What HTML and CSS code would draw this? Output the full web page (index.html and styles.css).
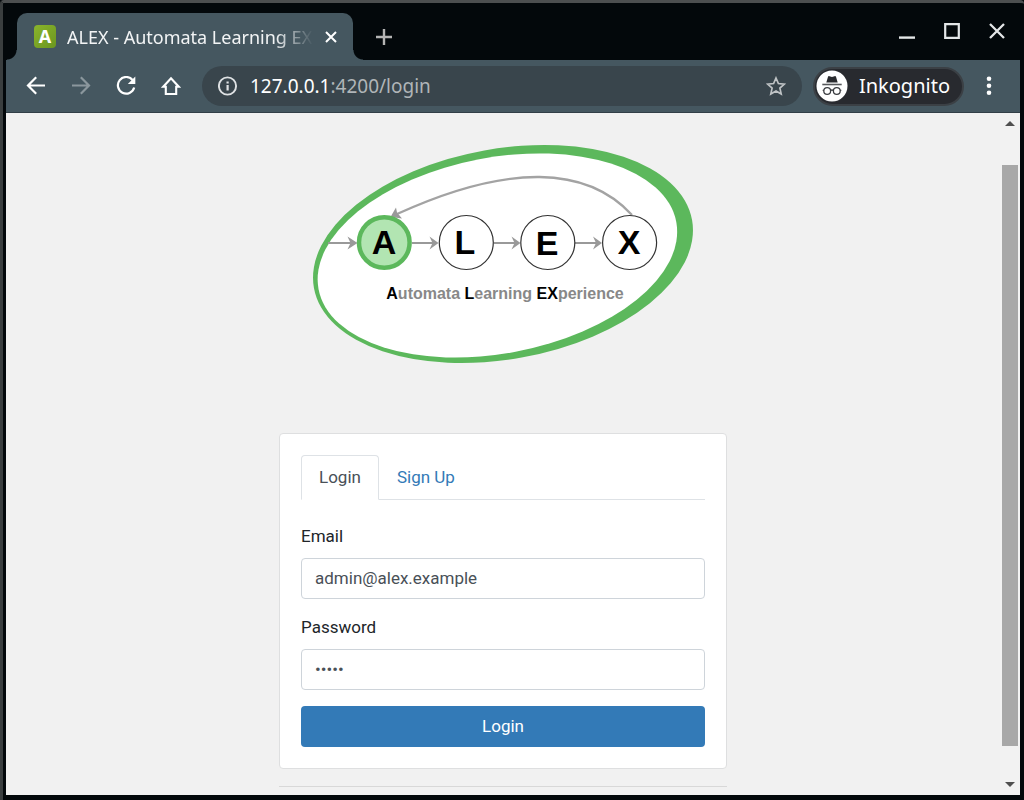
FILE: index.html
```html
<!DOCTYPE html>
<html lang="en">
<head>
<meta charset="utf-8">
<title>ALEX - Automata Learning EXperience</title>
<link rel="stylesheet" href="styles.css">
</head>
<body>
<div class="window">
  <header class="tabstrip">
    <div class="tab">
      <span class="favicon">A</span>
      <span class="tab-title">ALEX - Automata Learning EXp</span>
      <button class="icon-btn tab-close" aria-label="Close tab">
        <svg width="12" height="12" viewBox="0 0 12 12"><path d="M1 1l10 10M11 1L1 11" fill="none" stroke="#fff" stroke-width="2"/></svg>
      </button>
    </div>
    <button class="icon-btn new-tab" aria-label="New tab">
      <svg width="18" height="18" viewBox="0 0 18 18"><path d="M9 1v16M1 9h16" fill="none" stroke="#b4b4b4" stroke-width="2.4"/></svg>
    </button>
    <div class="window-controls">
      <button class="icon-btn" aria-label="Minimize"><svg width="16" height="16" viewBox="0 0 16 16"><path d="M0 14.6h16" stroke="#e4e7e8" stroke-width="2.4"/></svg></button>
      <button class="icon-btn" aria-label="Maximize"><svg width="16" height="16" viewBox="0 0 16 16"><path d="M1.2 1.2h13.6v13.6H1.2z" fill="none" stroke="#e4e7e8" stroke-width="2.2"/></svg></button>
      <button class="icon-btn" aria-label="Close"><svg width="16" height="16" viewBox="0 0 16 16"><path d="M1 1l14 14M15 1L1 15" fill="none" stroke="#e4e7e8" stroke-width="2.3"/></svg></button>
    </div>
  </header>

  <nav class="toolbar">
    <div class="nav-buttons">
      <button class="icon-btn" aria-label="Back"><svg width="20" height="20" viewBox="0 0 20 20"><path d="M19 9.500H2.500M10.200 1.200L2 9.500l8.200 8.300" fill="none" stroke="#fff" stroke-width="2.200"/></svg></button>
      <button class="icon-btn" aria-label="Forward"><svg width="20" height="20" viewBox="0 0 20 20"><path d="M1 9.500h16.500M9.800 1.200L18 9.500l-8.200 8.300" fill="none" stroke="#8b979d" stroke-width="2.200"/></svg></button>
      <button class="icon-btn" aria-label="Reload"><svg width="20" height="20" viewBox="0 0 20 20"><path d="M16.600 4A8.300 8.300 0 1 0 18.200 11.500" fill="none" stroke="#fff" stroke-width="2.200"/><path d="M19.300 .5v7.500h-7.500z" fill="#fff"/></svg></button>
      <button class="icon-btn" aria-label="Home"><svg width="20" height="20" viewBox="0 0 20 20"><path d="M2.200 10.700L10 2.200l7.800 8.500h-2.600V18h-10.400v-7.300z" fill="none" stroke="#fff" stroke-width="2.100"/></svg></button>
    </div>
    <div class="address-bar">
      <svg width="20" height="20" viewBox="0 0 20 20"><circle cx="9.500" cy="10" r="8.600" fill="none" stroke="#dfe2e4" stroke-width="1.900"/><path d="M8.500 9h2.200v5.600H8.500zM8.500 5.400h2.200v2.200H8.500z" fill="#dfe2e4"/></svg>
      <span class="address"><span class="host">127.0.0.1</span>:4200/login</span>
      <button class="icon-btn" aria-label="Bookmark"><svg width="20" height="20" viewBox="0 0 20 20"><path d="M10 2l2.400 5.500 6 .6-4.500 4 1.300 5.900L10 14.900 4.800 18l1.300-5.900-4.500-4 6-.6z" fill="none" stroke="#bfc3c5" stroke-width="1.700"/></svg></button>
    </div>
    <button class="incognito">
      <svg width="32" height="32" viewBox="0 0 32 32"><circle cx="16" cy="16" r="15.500" fill="#fff"/><path d="M10.300 12.500L12 6.800q.4-1 1.500-.6l2.500.7 2.500-.7q1.100-.4 1.500.6l1.700 5.700z" fill="#292a2e"/><path d="M6.300 14.500h19.400" stroke="#55575a" stroke-width="1.600"/><g fill="none" stroke="#3c3e42" stroke-width="1.300"><circle cx="11.200" cy="21" r="3.400"/><circle cx="20.800" cy="21" r="3.400"/><path d="M14.500 20.500q1.500-1 3 0M7.800 20.300H6.700M24.200 20.300h1.100"/></g></svg>
      <span>Inkognito</span>
    </button>
    <button class="icon-btn menu-btn" aria-label="Menu"><svg width="6" height="20" viewBox="0 0 6 20" fill="#fff"><circle cx="3" cy="2.700" r="2.300"/><circle cx="3" cy="9.700" r="2.300"/><circle cx="3" cy="16.700" r="2.300"/></svg></button>
  </nav>

  <div class="viewport">
    <main class="page">
      <svg class="logo" viewBox="313 145 380 218" role="img" aria-label="ALEX, Automata Learning Experience">
        <ellipse rx="192.100" ry="105.200" transform="translate(503 254) rotate(-10.200)" fill="#5cb85c"/>
        <ellipse rx="182" ry="98" transform="translate(497.400 255.500) rotate(-10.700)" fill="#fff"/>
        <g fill="none" stroke="#999" stroke-width="2">
          <path d="M328 243h26M412 243h24M494 243h23M575 243h24"/>
          <path d="M632 215C587 166 509 163 397 214" stroke="#a3a3a3" stroke-width="2.300"/>
        </g>
        <g fill="#999">
          <path d="M357.500 243l-10-6.500 3 6.500-3 6.500zM438.500 243l-9-6.500 3 6.500-3 6.500zM520.500 243l-9-6.500 3 6.500-3 6.500zM602 243l-9-6.500 3 6.500-3 6.500z"/>
          <path d="M390.500 217l5.500-9.500 1 5 5 6z"/>
        </g>
        <circle cx="384.300" cy="242.500" r="25.300" fill="#b2e5b2" stroke="#5cb85c" stroke-width="4.500"/>
        <g fill="#fff" stroke="#333" stroke-width="1.200"><circle cx="466.300" cy="242.500" r="27"/><circle cx="547.800" cy="242.500" r="27"/><circle cx="629.600" cy="242.500" r="27"/></g>
        <g class="logo-letters" text-anchor="middle"><text x="384" y="254">A</text><text x="465" y="254">L</text><text x="547" y="255">E</text><text x="629" y="254">X</text></g>
        <text class="logo-caption" x="505" y="299" text-anchor="middle"><tspan class="strong">A</tspan>utomata <tspan class="strong">L</tspan>earning <tspan class="strong">EX</tspan>perience</text>
      </svg>

      <div class="column">
        <section class="card">
          <div class="tabs">
            <a class="tab-link active" href="#login">Login</a>
            <a class="tab-link" href="#signup">Sign Up</a>
          </div>
          <form class="form">
            <div class="field">
              <label for="email">Email</label>
              <input id="email" type="email" value="admin@alex.example">
            </div>
            <div class="field">
              <label for="password">Password</label>
              <input id="password" type="password" value="admin">
            </div>
            <button class="submit" type="button">Login</button>
          </form>
        </section>
        <hr class="rule">
      </div>
    </main>
    <div class="scrollbar">
      <svg width="10" height="5" viewBox="0 0 10 5"><path d="M0 5l5-5 5 5z" fill="#505050"/></svg>
      <div class="track"><div class="thumb"></div></div>
      <svg width="10" height="5" viewBox="0 0 10 5"><path d="M0 0l5 5 5-5z" fill="#505050"/></svg>
    </div>
  </div>
</div>
</body>
</html>
```
FILE: styles.css
```css
* { box-sizing: border-box; }
body {
  margin: 0;
  background: #03080b;
  font-family: Roboto, "Liberation Sans", sans-serif;
  font-size: 17px;
  line-height: 24px;
  color: #212529;
}
button { font: inherit; cursor: pointer; }
.icon-btn {
  display: flex;
  padding: 0;
  border: 0;
  background: none;
}
.window {
  display: flex;
  flex-direction: column;
  height: 100vh;
  padding: 0 4px 5px 3px;
  border-top: 3px solid #4c4f50;
  border-left: 3px solid #3a3e3f;
  background: #03080b;
  border-radius: 4px 4px 0 0;
}
.tabstrip {
  display: flex;
  flex: none;
  align-items: flex-end;
  height: 57px;
  padding-left: 11px;
  font-family: "Noto Sans", "Open Sans", sans-serif;
}
.tab {
  position: relative;
  display: flex;
  align-items: center;
  width: 336px;
  height: 47px;
  padding: 0 16px 0 17px;
  border-radius: 10px 10px 0 0;
  background: #455760;
  color: #f2f4f5;
  font-size: 18px;
}
.tab::before,
.tab::after {
  content: "";
  position: absolute;
  bottom: 0;
  width: 10px;
  height: 10px;
}
.tab::before {
  right: 100%;
  background: radial-gradient(circle at 0 0, #03080b 9px, #455760 10px);
}
.tab::after {
  left: 100%;
  background: radial-gradient(circle at 100% 0, #03080b 9px, #455760 10px);
}
.favicon {
  width: 22px;
  height: 23px;
  border-radius: 4px;
  background: linear-gradient(135deg, #8ab42c, #6b961f);
  color: #fff;
  font-size: 18px;
  font-weight: 700;
  line-height: 23px;
  text-align: center;
}
.tab-title {
  flex: 1;
  margin: 0 12px 0 11px;
  overflow: hidden;
  white-space: nowrap;
  mask-image: linear-gradient(to right, #000 208px, transparent);
}
.new-tab { margin: 0 auto 14px 22px; }
.window-controls {
  display: flex;
  gap: 29px;
  margin: 0 15px 21px 0;
}
.toolbar {
  display: flex;
  flex: none;
  align-items: center;
  height: 53px;
  padding: 0 28px 0 20px;
  border-bottom: 1px solid #323f47;
  background: #455760;
  font-family: "Noto Sans", "Open Sans", sans-serif;
}
.nav-buttons {
  display: flex;
  gap: 25px;
  margin-right: 21px;
}
.address-bar {
  display: flex;
  flex: 1;
  align-items: center;
  height: 40px;
  padding: 0 16px;
  border-radius: 20px;
  background: #39454c;
}
.address {
  flex: 1;
  margin-left: 12px;
  color: #b0b5b8;
  font-size: 19px;
}
.host { color: #fff; }
.incognito {
  display: flex;
  align-items: center;
  gap: 11px;
  height: 39px;
  margin: 0 22px 0 11px;
  padding: 0 12px 0 1px;
  border: 2px solid #3b4045;
  border-radius: 20px;
  background: #282a2f;
  color: #fff;
  font-size: 20px;
}
.viewport {
  display: flex;
  flex: 1;
  min-height: 0;
  background: #f1f1f1;
}
.page {
  display: flex;
  flex: 1;
  flex-direction: column;
  align-items: center;
  padding-top: 32px;
  overflow: hidden;
}
.logo {
  flex: none;
  width: 380px;
  max-width: 100%;
  margin-bottom: 70px;
}
.logo-letters {
  font: 700 34px "Liberation Sans", sans-serif;
  fill: #000;
}
.logo-caption {
  font: 700 16px "Liberation Sans", sans-serif;
  fill: #888;
}
.strong { fill: #000; }
.column {
  width: 100%;
  max-width: 448px;
}
.card {
  padding: 21px;
  border: 1px solid #dedfe0;
  border-radius: 4px;
  background: #fff;
}
.tabs {
  display: flex;
  border-bottom: 1px solid #dee2e6;
}
.tab-link {
  height: 45px;
  margin-bottom: -1px;
  padding: 9px 17px;
  border: 1px solid transparent;
  color: #337ab7;
  text-decoration: none;
}
.tab-link.active {
  border-color: #dee2e6 #dee2e6 #fff;
  border-radius: 4px 4px 0 0;
  background: #fff;
  color: #495057;
}
.form {
  display: flex;
  flex-direction: column;
  gap: 16px;
  margin-top: 24px;
}
.field {
  display: flex;
  flex-direction: column;
  gap: 10px;
}
.field input {
  width: 100%;
  height: 41px;
  padding: 0 13px 2px;
  border: 1px solid #ced4da;
  border-radius: 4px;
  background: #fff;
  color: #495057;
  font: inherit;
}
.submit {
  height: 41px;
  padding: 0 0 2px;
  border: 0;
  border-radius: 4px;
  background: #337ab7;
  color: #fff;
}
.rule {
  margin: 17px 0;
  border: 0;
  border-top: 1px solid #d8d8d8;
}
.scrollbar {
  display: flex;
  flex: none;
  flex-direction: column;
  align-items: center;
  width: 20px;
  padding: 8px 0;
  background: #f2f2f2;
}
.track {
  flex: 1;
  width: 16px;
  padding: 39px 0 36px;
}
.thumb {
  height: 100%;
  background: #a8a8a8;
}
```
